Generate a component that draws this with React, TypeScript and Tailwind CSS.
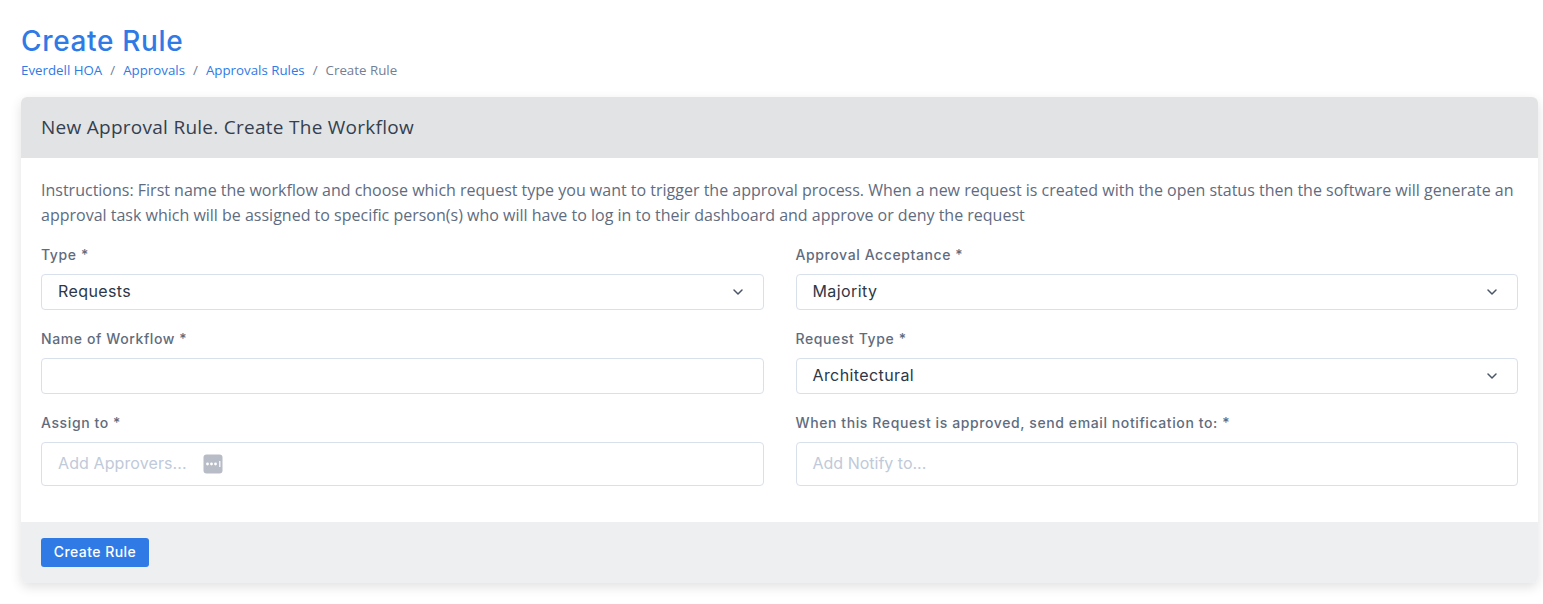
import React from "react";

const poppins = "font-['Inter','Liberation_Sans',sans-serif]";

function Chevron() {
  return (
    <svg width="20" height="20" viewBox="0 0 20 20" fill="none" className="shrink-0">
      <path d="M6 8l4 4 4-4" stroke="#4a5568" strokeWidth="1.5" strokeLinecap="round" strokeLinejoin="round" />
    </svg>
  );
}

function Label({ children }: { children: React.ReactNode }) {
  return <label className={`block h-[20px] mb-[9px] text-[14px] leading-[20px] font-medium text-[#5f6c7e] tracking-[0.6px] ${poppins}`}>{children}</label>;
}

function Select({ value }: { value: string }) {
  return (
    <div className="h-[36px] flex items-center justify-between pl-[16px] pr-[15px] bg-white border border-[#d8e0ec] rounded-[4px]">
      <span className={`pb-[2px] text-[16px] tracking-[0.4px] text-[#2d3748] ${poppins}`}>{value}</span>
      <Chevron />
    </div>
  );
}

function Field({ label, children }: { label: string; children: React.ReactNode }) {
  return (
    <div className="flex flex-col">
      <Label>{label}</Label>
      {children}
    </div>
  );
}

export default function App() {
  return (
    <div className="min-h-[604px] bg-white pl-[21px] pr-[5px] pt-[24px] font-['Open_Sans',sans-serif]">
      <h1 className={`text-[28px] leading-[32px] font-medium tracking-[0.65px] text-[#2f7ae5] pt-[1px] -mb-[1px] ${poppins}`}>Create Rule</h1>
      <nav className="mt-[5px] h-[20px] pb-[2px] flex items-center text-[13.3px] leading-[18px] text-[#2f7ae5]">
        <span>Everdell HOA</span>
        <span className="mx-[8px] text-[#718096]">/</span>
        <span>Approvals</span>
        <span className="mx-[8px] text-[#718096]">/</span>
        <span>Approvals Rules</span>
        <span className="mx-[8px] text-[#718096]">/</span>
        <span className="text-[#718096]">Create Rule</span>
      </nav>
      <div className="mt-[16px] rounded-[6px] overflow-hidden bg-white shadow-[0_4px_12px_rgba(0,0,0,0.12)]">
        <div className="h-[61px] flex items-center px-[20px] bg-[#e2e3e5]">
          <h2 className="text-[19px] tracking-[0.27px] text-[#343f50]">New Approval Rule. Create The Workflow</h2>
        </div>
        <div className="px-[20px] pt-[20px] pb-[36px]">
          <p className="text-[16px] leading-[25px] text-[#5f6c80]">
            Instructions: First name the workflow and choose which request type you want to trigger the approval process. When a new request is created with the open status then the software will generate an approval task which will be assigned to specific person(s) who will have to log in to their dashboard and approve or deny the request
          </p>
          <div className="mt-[17px] grid grid-cols-2 gap-x-[32px] gap-y-[19px]">
            <Field label="Type *"><Select value="Requests" /></Field>
            <Field label="Approval Acceptance *"><Select value="Majority" /></Field>
            <Field label="Name of Workflow *">
              <div className="h-[36px] bg-white border border-[#d8e0ec] rounded-[4px]" />
            </Field>
            <Field label="Request Type *"><Select value="Architectural" /></Field>
            <Field label="Assign to *">
              <div className="h-[44px] flex items-center pl-[16px] bg-white border border-[#d8e0ec] rounded-[4px]">
                <span className={`pb-[2px] text-[16px] tracking-[0.1px] text-[#c0cad9] ${poppins}`}>Add Approvers...</span>
                <svg width="20" height="20" viewBox="0 0 20 20" className="ml-[16px]">
                  <rect x="0.5" y="0.5" width="19" height="19" rx="3" fill="#b7bcc7" />
                  <circle cx="4.5" cy="10" r="1.4" fill="#fff" />
                  <circle cx="8.5" cy="10" r="1.4" fill="#fff" />
                  <circle cx="12.5" cy="10" r="1.4" fill="#fff" />
                  <rect x="16.2" y="7" width="1.2" height="6" fill="#fff" />
                </svg>
              </div>
            </Field>
            <Field label="When this Request is approved, send email notification to: *">
              <div className="h-[44px] flex items-center pl-[16px] bg-white border border-[#d8e0ec] rounded-[4px]">
                <span className={`pb-[2px] text-[16px] text-[#c0cad9] ${poppins}`}>Add Notify to...</span>
              </div>
            </Field>
          </div>
        </div>
        <div className="h-[61px] flex items-center px-[20px] bg-[#eeeff1]">
          <button className={`h-[29px] w-[108px] pb-[2px] rounded-[3px] bg-[#2f7ae5] text-white text-[14px] tracking-[0.45px] font-medium ${poppins}`}>Create Rule</button>
        </div>
      </div>
    </div>
  );
}
